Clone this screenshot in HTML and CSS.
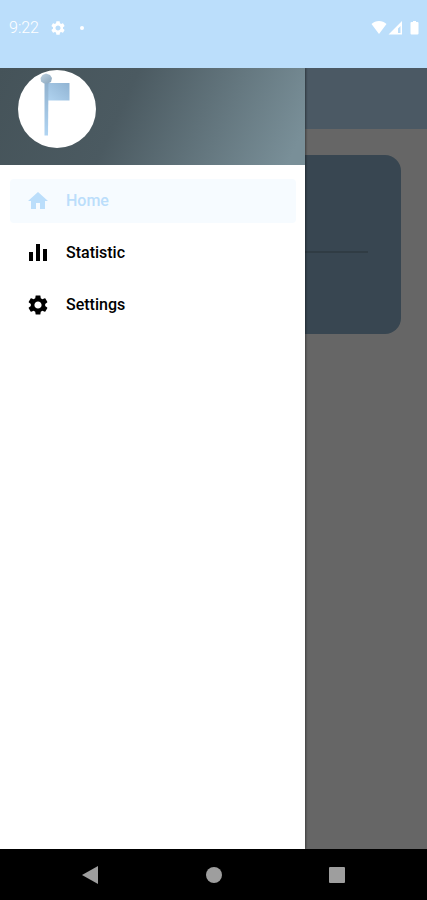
FILE: index.html
```html
<!DOCTYPE html>
<html lang="en">
<head>
<meta charset="utf-8">
<meta name="viewport" content="width=device-width, initial-scale=1">
<title>Home</title>
<link rel="stylesheet" href="styles.css">
</head>
<body>
<div class="screen">
  <header class="status">
    <div class="status-left">
      <time class="clock">9:22</time>
      <svg class="status-gear" viewBox="2 2 20 20" aria-hidden="true"><path d="M19.14 12.94c.04-.3.06-.61.06-.94 0-.32-.02-.64-.07-.94l2.03-1.58c.18-.14.23-.41.12-.61l-1.92-3.32c-.12-.22-.37-.29-.59-.22l-2.39.96c-.5-.38-1.03-.7-1.62-.94l-.36-2.54c-.04-.24-.24-.41-.48-.41h-3.84c-.24 0-.43.17-.47.41l-.36 2.54c-.59.24-1.13.57-1.62.94l-2.39-.96c-.22-.08-.47 0-.59.22L2.74 8.87c-.12.21-.08.47.12.61l2.03 1.58c-.05.3-.09.63-.09.94s.02.64.07.94l-2.03 1.58c-.18.14-.23.41-.12.61l1.92 3.32c.12.22.37.29.59.22l2.39-.96c.5.38 1.03.7 1.62.94l.36 2.54c.05.24.24.41.48.41h3.84c.24 0 .44-.17.47-.41l.36-2.54c.59-.24 1.13-.56 1.62-.94l2.39.96c.22.08.47 0 .59-.22l1.92-3.32c.12-.22.07-.47-.12-.61l-2.01-1.58zM12 15.6c-1.98 0-3.6-1.62-3.6-3.6s1.62-3.6 3.6-3.6 3.6 1.62 3.6 3.6-1.62 3.6-3.6 3.6z"/></svg>
      <span class="dot"></span>
    </div>
    <svg class="status-icons" viewBox="0 0 48 14" aria-hidden="true">
      <path d="M0.500 3C4.500-1 11.500-1 15.500 3L8 13z"/>
      <path fill-rule="evenodd" d="M31 0v13.500H17.500zM29.500 5v7H27V7.500z"/>
      <path d="M40.500 1H42V0h3v1h1.500q1 0 1 1v10.500q0 1-1 1h-6q-1 0-1-1V2q0-1 1-1z"/>
    </svg>
  </header>

  <div class="body">
    <main class="page">
      <div class="appbar"></div>
      <section class="card"><hr class="divider"></section>
    </main>
    <div class="scrim"></div>
    <aside class="drawer">
      <div class="drawer-header">
        <svg class="avatar" viewBox="0 0 78 78" role="img" aria-label="Flag logo">
          <defs>
            <linearGradient id="cloth" x1="0" y1="1" x2="1" y2="0"><stop offset="0" stop-color="#b0d3f0"/><stop offset="1" stop-color="#90b3d2"/></linearGradient>
            <linearGradient id="pole" x1="0" y1="0" x2="0" y2="1"><stop offset="0" stop-color="#8fb0cd"/><stop offset="1" stop-color="#b0d4f2"/></linearGradient>
            <linearGradient id="knob" x1="0" y1="0" x2="1" y2="1"><stop offset="0" stop-color="#bfd2e0"/><stop offset="1" stop-color="#89a6be"/></linearGradient>
          </defs>
          <circle cx="39" cy="39" r="39" fill="#fff"/>
          <path d="M30 13h21.500v17.500H30z" fill="url(#cloth)"/>
          <path d="M26.500 10h4L30 65.500h-3.500z" fill="url(#pole)"/>
          <path d="M28 3.500l4 1.500 2 3-1 4-3 1.500h-4l-3-2-.500-3.500 2-3z" fill="url(#knob)"/>
        </svg>
      </div>
      <nav class="menu">
        <a class="item active" href="#home" aria-current="page">
          <svg class="icon" viewBox="0 0 24 24" aria-hidden="true"><path d="M10 20v-6h4v6h5v-8h3L12 3 2 12h3v8z"/></svg>
          Home
        </a>
        <a class="item" href="#statistic">
          <svg class="icon" viewBox="0 0 24 24" aria-hidden="true"><path d="M3 11h4v9H3zM10 3h4v17h-4zM17 8h4v12h-4z"/></svg>
          Statistic
        </a>
        <a class="item" href="#settings">
          <svg class="icon" viewBox="0 0 24 24" aria-hidden="true"><path d="M19.14 12.94c.04-.3.06-.61.06-.94 0-.32-.02-.64-.07-.94l2.03-1.58c.18-.14.23-.41.12-.61l-1.92-3.32c-.12-.22-.37-.29-.59-.22l-2.39.96c-.5-.38-1.03-.7-1.62-.94l-.36-2.54c-.04-.24-.24-.41-.48-.41h-3.84c-.24 0-.43.17-.47.41l-.36 2.54c-.59.24-1.13.57-1.62.94l-2.39-.96c-.22-.08-.47 0-.59.22L2.74 8.87c-.12.21-.08.47.12.61l2.03 1.58c-.05.3-.09.63-.09.94s.02.64.07.94l-2.03 1.58c-.18.14-.23.41-.12.61l1.92 3.32c.12.22.37.29.59.22l2.39-.96c.5.38 1.03.7 1.62.94l.36 2.54c.05.24.24.41.48.41h3.84c.24 0 .44-.17.47-.41l.36-2.54c.59-.24 1.13-.56 1.62-.94l2.39.96c.22.08.47 0 .59-.22l1.92-3.32c.12-.22.07-.47-.12-.61l-2.01-1.58zM12 15.6c-1.98 0-3.6-1.62-3.6-3.6s1.62-3.6 3.6-3.6 3.6 1.62 3.6 3.6-1.62 3.6-3.6 3.6z"/></svg>
          Settings
        </a>
      </nav>
    </aside>
  </div>

  <footer class="sysnav">
    <button class="key" type="button" aria-label="Back"><svg viewBox="0 0 18 18"><path d="M17 0v18L1 9z"/></svg></button>
    <button class="key" type="button" aria-label="Home"><svg viewBox="0 0 18 18"><circle cx="9" cy="9" r="8"/></svg></button>
    <button class="key" type="button" aria-label="Recent apps"><svg viewBox="0 0 18 18"><rect x="1" y="1" width="16" height="16" rx="1"/></svg></button>
  </footer>
</div>
</body>
</html>
```
FILE: styles.css
```css
* {
  box-sizing: border-box;
}

body {
  margin: 0;
  font-family: Roboto, "Liberation Sans", sans-serif;
  background: #000;
}

.screen {
  display: flex;
  flex-direction: column;
  min-height: 100vh;
}

.status {
  display: flex;
  align-items: center;
  justify-content: space-between;
  height: 68px;
  padding: 0 8px 13px 9px;
  background: #bbdefb;
  color: #fff;
}

.status-left {
  display: flex;
  align-items: center;
  gap: 12px;
}

.clock {
  font-size: 16px;
  font-weight: 300;
  line-height: 20px;
}

.status-gear {
  width: 14px;
  height: 14px;
  fill: #fff;
}

.dot {
  width: 4px;
  height: 4px;
  margin-left: 3px;
  border-radius: 50%;
  background: #fff;
}

.status-icons {
  width: 48px;
  height: 14px;
  fill: #fff;
}

.body {
  position: relative;
  display: flex;
  flex: 1;
}

.page {
  flex: 1;
  background: #fff;
}

.appbar {
  height: 61px;
  background: #bbdefb;
}

.card {
  height: 179px;
  margin: 26px;
  padding: 96px 33px 0;
  border-radius: 16px;
  background: #8cafca;
}

.divider {
  height: 2px;
  margin: 0;
  border: 0;
  background: #7896aa;
}

.scrim {
  position: absolute;
  inset: 0;
  background: rgba(0, 0, 0, 0.6);
}

.drawer {
  position: absolute;
  top: 0;
  bottom: 0;
  left: 0;
  width: calc(100% - 122px);
  background: #fff;
  box-shadow: 1px 0 2px rgba(0, 0, 0, 0.4);
  clip-path: inset(0 -4px 0 0);
}

.drawer-header {
  height: 97px;
  padding: 2px 18px;
  background: linear-gradient(115deg, #455359 0%, #4b5a61 40%, #798f98 95%);
}

.avatar {
  display: block;
  width: 78px;
  height: 78px;
}

.menu {
  display: flex;
  flex-direction: column;
  gap: 8px;
  padding: 14px 9px 14px 10px;
}

.item {
  display: flex;
  align-items: center;
  gap: 16px;
  height: 44px;
  padding: 0 16px;
  border-radius: 4px;
  color: #000;
  font-size: 16px;
  font-weight: 500;
  line-height: 20px;
  text-decoration: none;
}

.item.active {
  background: #f6fbff;
  color: #bbdefb;
}

.icon {
  width: 24px;
  height: 24px;
  fill: currentColor;
}

.sysnav {
  display: flex;
  align-items: center;
  justify-content: space-between;
  height: 51px;
  padding: 0 81px;
  background: #000;
}

.key {
  display: flex;
  padding: 0;
  border: 0;
  background: none;
}

.key svg {
  width: 18px;
  height: 18px;
  fill: #9e9e9e;
}
```
